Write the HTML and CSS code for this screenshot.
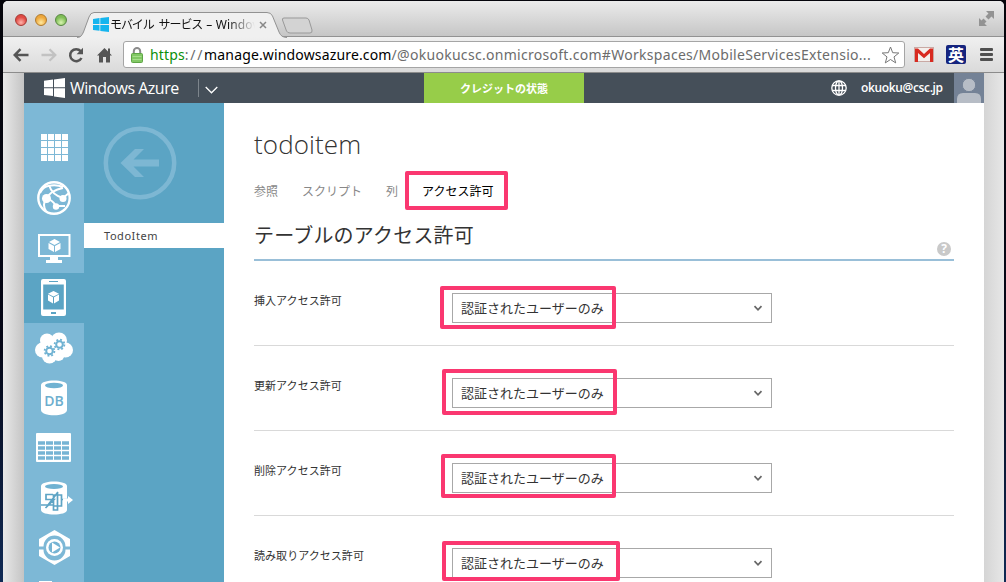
FILE: index.html
```html
<!DOCTYPE html>
<html lang="ja">
<head>
<meta charset="utf-8">
<title>モバイル サービス – Windows Azure</title>
<link rel="stylesheet" href="styles.css">
</head>
<body>
<div class="window">
  <div class="tabstrip">
    <div class="lights"><i class="light red"></i><i class="light amber"></i><i class="light green"></i></div>
    <div class="tab">
      <svg class="tab-shape" width="212" height="26" viewBox="0 0 212 26"><path d="M0 25.5C4 25.5 5 23 6.500 20L12 5Q13.500.5 17 .5H190Q194 .5 195.500 4L202 20Q204 25.500 210 25.500" fill="#f0f0f0" stroke="#929292"/></svg>
      <svg class="favicon" width="16" height="15" viewBox="0 0 16 15"><path fill="#16b5ee" d="M0 2l6.500-.9v6H0zM7.300 1L16 0v7.100H7.300zM0 7.900h6.500v5.900L0 13zM7.300 7.900H16V15l-8.700-1z"/></svg>
      <span class="tab-title">モバイル<span class="second">サービス</span><span class="latin">– Windov</span></span>
      <svg class="tab-close" width="8" height="8" viewBox="0 0 8 8"><path d="M1 1l6 6M7 1L1 7" stroke="#888" stroke-width="1.500"/></svg>
    </div>
    <svg class="newtab" width="34" height="18" viewBox="0 0 34 18"><path d="M3 1h22q2 0 3 2l3 10q.5 3-2 3H9q-2.500 0-3.500-2L1.500 3Q1 1 3 1z" fill="#d3d3d3" stroke="#999"/></svg>
    <svg class="expand" width="15" height="15" viewBox="0 0 15 15" fill="#939393"><path d="M7 0h8v8l-2.500-2.500-3 3-3-3 3-3zM0 7l2.500 2.500 2-2 3 3-2 2L8 15H0z"/></svg>
  </div>
  <div class="toolbar">
    <svg class="back" width="16" height="14" viewBox="0 0 16 14"><path d="M15.500 7H2M7.500 1.200L1.700 7l5.800 5.800" fill="none" stroke="#555" stroke-width="2.500"/></svg>
    <svg class="forward" width="16" height="14" viewBox="0 0 16 14"><path d="M.5 7H14M8.500 1.200L14.300 7l-5.800 5.800" fill="none" stroke="#c2c2c2" stroke-width="2.300"/></svg>
    <svg class="reload" width="16" height="16" viewBox="0 0 16 16"><path d="M12.700 4.200A6 6 0 1 0 13.500 11" fill="none" stroke="#555" stroke-width="2.500"/><path d="M15 .8v6.400H8.600z" fill="#555"/></svg>
    <svg class="home" width="15" height="16" viewBox="0 0 15 16"><path d="M7.500 1L15 8.500H13V15.500H9V10H6v5.500H2V8.500H0zM11 1.500h2v5l-2-2z" fill="#555"/></svg>
    <div class="omnibox">
      <svg class="lock" width="12" height="16" viewBox="0 0 12 16"><path d="M2.800 8V4.200a3.200 3.200 0 0 1 6.400 0V8" fill="none" stroke="#8b8b8b" stroke-width="2"/><rect x=".5" y="6.500" width="11" height="9" rx="1" fill="#82c865" stroke="#5ea546"/><path d="M1.500 9.500h9M1.500 12.500h9" stroke="#a6df8c"/></svg>
      <span class="url"><span class="secure">https</span><span class="path sep">://</span><span class="host">manage.windowsazure.com</span><span class="path rest">/@okuokucsc.onmicrosoft.com#Workspaces/MobileServicesExtensio...</span></span>
      <svg class="star" width="19" height="18" viewBox="0 0 19 18"><path d="M9.500 1l2.200 5.700 6.100.3-4.800 3.900 1.700 6-5.200-3.400-5.200 3.400 1.700-6L1.200 7l6.100-.3z" fill="#fff" stroke="#777"/></svg>
    </div>
    <svg class="gmail" width="20" height="15" viewBox="0 0 20 15"><rect x=".5" y=".5" width="19" height="14" fill="#f4efec" stroke="#c9a9a4"/><path d="M1 15V1.500h3l6 5.500 6-5.500h3V15h-3V6l-6 5.300L4 6v9z" fill="#d82a20"/></svg>
    <span class="eiji">英</span>
    <span class="menu"><i></i><i></i><i></i></span>
  </div>
  <div class="viewport">
    <div class="portal">
      <header class="topbar">
        <svg class="winlogo" width="21" height="20" viewBox="0 0 21 20"><path fill="#fff" d="M0 2.800l9-1.300v7.800H0zM10 1.400L21 0v9.300H10zM0 10.300h9v7.800l-9-1.200zM10 10.300h11V20l-11-1.600z"/></svg>
        <span class="brand">Windows Azure</span>
        <span class="bar"></span>
        <svg class="brand-chev" width="13" height="8" viewBox="0 0 13 8"><path d="M.7 1l5.800 5.800L12.300 1" fill="none" stroke="#fff" stroke-width="1.300"/></svg>
        <span class="credit">クレジットの状態</span>
        <svg class="globe" width="16" height="16" viewBox="0 0 16 16" fill="none" stroke="#fff" stroke-width="1.300"><circle cx="8" cy="8" r="7.200"/><ellipse cx="8" cy="8" rx="3.500" ry="7.200"/><path d="M8 1v14M1.500 5.500h13M1.500 10.500h13"/></svg>
        <span class="account">okuoku@csc.jp</span>
        <svg class="avatar" width="30" height="30" viewBox="0 0 30 30"><rect width="30" height="30" fill="#748296"/><path d="M3 30v-4q0-6 6-6h12q6 0 6 6v4z" fill="#b7bdc6"/><circle cx="15" cy="12" r="6.700" fill="#b7bdc6" stroke="#748296"/></svg>
      </header>
      <div class="body">
        <nav class="rail">
          <a><svg width="40" height="40" viewBox="0 0 40 40"><path d="M10 6v28M17 6v28M24 6v28M31 6v28" stroke="#fff" stroke-width="6"  stroke-dasharray="6 1"/></svg></a>
          <a><svg width="40" height="40" viewBox="0 0 40 40" fill="none" stroke="#fff"><circle cx="20" cy="20" r="15.700" stroke-width="2.400"/><path d="M6 15Q9 9 14 8Q22 6 29 9M12 21Q17 12 29 10M15 7q3 10 14 13M12 21q6 0 10 7q5 0 9 0M12 21q-4 6 0 12M29 20l6-5" stroke-width="2"/><g fill="#fff" stroke="none"><circle cx="12.500" cy="20.500" r="4.500"/><circle cx="29" cy="20.500" r="3.500"/><circle cx="22" cy="28.500" r="3.200"/></g></svg></a>
          <a><svg width="40" height="40" viewBox="0 0 40 40"><rect x="5" y="7" width="30.500" height="21" fill="none" stroke="#fff" stroke-width="2"/><path d="M16 29h8v3h4v3H12v-3h4z" fill="#fff"/><path d="M20.500 11l5.500 3-5.500 3-5.500-3zM14.500 15l5.500 3v6l-5.500-3zM26.500 15L21 18v6l5.500-3z" fill="#fff"/></svg></a>
          <a class="current"><svg width="40" height="40" viewBox="0 0 40 40"><path fill-rule="evenodd" fill="#fff" d="M9 1h21q2 0 2 2v33q0 2-2 2H9q-2 0-2-2V3q0-2 2-2zM9.200 6.500v25h20.600v-25zM15 3v1h9V3zM17 34v2h5v-2z"/><path d="M19.500 13l5.500 2.800-5.500 2.800-5.500-2.800zM14 16.600l5 2.700v6.300l-5-3zM25 16.600l-5 2.700v6.300l5-3z" fill="#fff"/></svg></a>
          <a><svg width="40" height="40" viewBox="0 0 40 40"><g fill="#fff"><circle cx="8.500" cy="22" r="7.500"/><circle cx="13" cy="12.500" r="7"/><circle cx="25" cy="12.500" r="8"/><circle cx="31.500" cy="22" r="7.500"/><circle cx="24.500" cy="27" r="6"/><circle cx="15.500" cy="28" r="7.500"/><path d="M10 10h20v18H10z"/></g><g fill="none" stroke="#6fb2d2"><circle cx="15.500" cy="23" r="3.300" stroke-width="2"/><circle cx="15.500" cy="23" r="4.900" stroke-width="1.800" stroke-dasharray="1.900 1.950"/><circle cx="25.500" cy="16.500" r="3.300" stroke-width="2"/><circle cx="25.500" cy="16.500" r="4.900" stroke-width="1.800" stroke-dasharray="1.900 1.950"/></g></svg></a>
          <a><svg width="40" height="40" viewBox="0 0 40 40"><path d="M7 7c0-6 26-6 26 0v25c0 7-26 7-26 0z" fill="#fff"/><ellipse cx="20" cy="7.500" rx="9" ry="2.700" fill="#6fb2d2"/><text x="20" y="27.500" text-anchor="middle" class="db">DB</text></svg></a>
          <a><svg width="40" height="40" viewBox="0 0 40 40"><rect x="2" y="5" width="35" height="29" rx="1" fill="#fff"/><path d="M4 15h31M4 20h31M4 25h31M4 30h31" stroke="#76b4d4" stroke-width="3.700" stroke-dasharray="7 1"/></svg></a>
          <a><svg width="40" height="40" viewBox="0 0 40 40"><path d="M7 8c0-6 26-6 26 0v24c0 6-26 6-26 0z" fill="#fff"/><ellipse cx="20" cy="8.500" rx="9" ry="2.500" fill="#6fb2d2"/><path d="M19 16.500h-7v5h8L11.500 30M7 27h13M24 14L14 27M23.500 14v18h-4V17h8v11h-8M28 21.500h5" fill="none" stroke="#5da4c5" stroke-width="1.700"/><path d="M29 20.500h5v-2.500l5 4-5 4v-2.500h-5z" fill="#fff"/></svg></a>
          <a><svg width="40" height="40" viewBox="0 0 40 40"><path d="M20.500 2L36 11v7.500h-4.500a11 11 0 0 0-22 0H5V11zM20.500 37L36 28v-6.500h-4.500a11 11 0 0 1-22 0H5V28z" fill="#fff"/><circle cx="20.500" cy="19.500" r="8.500" fill="#fff"/><circle cx="20.500" cy="19.500" r="6" fill="#76b4d4"/><path d="M18 14.500l8 5-8 5z" fill="#fff"/></svg></a>
          <a><svg width="40" height="40" viewBox="0 0 40 40"><path d="M5 3h13v3h17v30H5z" fill="#fff"/></svg></a>
        </nav>
        <aside class="drawer">
          <svg class="circle-back" width="74" height="74" viewBox="0 0 74 74"><circle cx="37" cy="37" r="34.200" fill="none" stroke="#7db7d3" stroke-width="4.500"/><path d="M17.500 37L32 23h9L30.500 33.500H56v7H30.500L41 51h-9z" fill="#7db7d3"/></svg>
          <div class="drawer-item">TodoItem</div>
        </aside>
        <main class="content">
          <h1>todoitem</h1>
          <div class="tabs"><span>参照</span><span>スクリプト</span><span>列</span><span class="active">アクセス許可<i class="mark mark-tab"></i></span></div>
          <div class="section"><h2>テーブルのアクセス許可</h2><span class="help">?</span></div>
          <div class="row"><label>挿入アクセス許可</label><div class="select">認証されたユーザーのみ<svg width="10" height="7" viewBox="0 0 10 7"><path d="M1.500 1.200L5 4.800l3.500-3.600" fill="none" stroke="#666" stroke-width="1.700"/></svg><i class="mark mark-1"></i></div></div>
          <div class="row"><label>更新アクセス許可</label><div class="select">認証されたユーザーのみ<svg width="10" height="7" viewBox="0 0 10 7"><path d="M1.500 1.200L5 4.800l3.500-3.600" fill="none" stroke="#666" stroke-width="1.700"/></svg><i class="mark mark-2"></i></div></div>
          <div class="row"><label>削除アクセス許可</label><div class="select">認証されたユーザーのみ<svg width="10" height="7" viewBox="0 0 10 7"><path d="M1.500 1.200L5 4.800l3.500-3.600" fill="none" stroke="#666" stroke-width="1.700"/></svg><i class="mark mark-3"></i></div></div>
          <div class="row"><label>読み取りアクセス許可</label><div class="select">認証されたユーザーのみ<svg width="10" height="7" viewBox="0 0 10 7"><path d="M1.500 1.200L5 4.800l3.500-3.600" fill="none" stroke="#666" stroke-width="1.700"/></svg><i class="mark mark-4"></i></div></div>
        </main>
      </div>
    </div>
  </div>
</div>
</body>
</html>
```

FILE: styles.css
```css
* { box-sizing: border-box; }
html, body { margin: 0; height: 582px; overflow: hidden; }
body {
  padding: 1px 2px 0 3px;
  background: linear-gradient(#05050b, #060818 60%, #102a55);
  font-family: "Noto Sans", "Noto Sans CJK JP", sans-serif;
}
svg { display: block; flex: none; }
.window { height: 581px; border-radius: 5px 5px 0 0; overflow: hidden; background: #e5e5e5; }

/* browser chrome */
.tabstrip {
  display: flex; height: 36px; padding-left: 12px;
  background: linear-gradient(#ebebeb, #c6c6c6);
  border-bottom: 1px solid #929292;
}
.lights { display: flex; gap: 8px; padding-top: 13px; width: 62px; flex: none; }
.light { width: 12px; height: 12px; border-radius: 50%; border: 1px solid; }
.red { background: radial-gradient(circle at 50% 75%, #ffb3ab, #e04a43 60%); border-color: #a53934; }
.amber { background: radial-gradient(circle at 50% 75%, #ffeaa0, #eda73c 60%); border-color: #af7a2d; }
.green { background: radial-gradient(circle at 50% 75%, #d8f5b0, #7fbd56 60%); border-color: #568641; }
.tab { display: grid; grid-template: 26px / 212px; width: 203px; margin-top: 11px; flex: none; }
.tab > * { grid-area: 1 / 1; }
.favicon { margin: 5px 0 0 16px; }
.tab-title {
  margin: 4px 0 0 33px; width: 146px; white-space: nowrap;
  font: 12px/17px "Noto Sans", "Noto Sans CJK JP", sans-serif; letter-spacing: -1.1px; color: #111;
  mask-image: linear-gradient(90deg, #000 118px, transparent 145px);
}
.second { margin-left: 5px; }
.latin { margin-left: 4px; letter-spacing: .15px; }
.tab-close { margin: 9px 0 0 182px; }
.newtab { margin: 16px 0 0 1px; }
.expand { margin: 10px 10px 0 auto; }
.toolbar {
  display: flex; align-items: center; height: 36px; padding: 0 12px 0 10px;
  background: linear-gradient(#f0f0f0, #dadada); border-bottom: 1px solid #8c8c8c;
}
.forward { margin-left: 12px; }
.reload { margin-left: 11px; }
.home { margin-left: 13px; }
.omnibox {
  display: flex; align-items: center; width: 782px; height: 27px; margin-left: 11px; padding: 0 4px 0 7px;
  background: #fff; border: 1px solid #a5a5a5; border-radius: 3px; flex: none;
}
.url { margin-left: 7px; width: 732px; white-space: nowrap; font: 14px/24px "Noto Sans", sans-serif; color: #000; letter-spacing: .15px; }
.secure { color: #0a8f0a; }
.path { color: #6c6c6c; }
.sep { letter-spacing: 1.7px; }
.rest { letter-spacing: .29px; }
.star { margin-left: 1px; }
.gmail { margin-left: 9px; }
.eiji {
  margin-left: 12px; width: 20px; height: 19px; border-radius: 2px; background: #15247e; color: #fff;
  font: bold 16px/18px "Noto Sans CJK JP", sans-serif; text-align: center; flex: none;
}
.menu { display: flex; flex-direction: column; gap: 2px; margin-left: 14px; flex: none; }
.menu i { width: 13px; height: 3px; border-radius: 1px; background: #505050; }

/* portal */
.viewport { height: 509px; padding: 0 20px 0 21px; background: linear-gradient(90deg, #e8e8e8, #c4c4c4 21px, #d4d4d4 980px, #e7e7e7); }
.portal { width: 960px; height: 509px; background: #fff; }
.topbar { display: flex; align-items: center; height: 30px; background: #454f59; color: #fff; }
.winlogo { margin-left: 20px; }
.brand { margin-left: 5px; width: 112px; font: 16px/28px "Open Sans", sans-serif; letter-spacing: -.5px; white-space: nowrap; }
.bar { margin-left: 16px; width: 1px; height: 18px; background: #7d858c; }
.brand-chev { margin: 4px 0 0 6px; }
.credit {
  margin-left: 206px; width: 160px; height: 30px; background: #97cd49; text-align: center;
  font: bold 11px/31px "Noto Sans CJK JP", sans-serif; flex: none;
}
.globe { margin-left: 247px; }
.account { margin-left: 14px; width: 82px; font: 600 12px/30px "Open Sans", sans-serif; letter-spacing: -.35px; white-space: nowrap; }
.avatar { margin-left: auto; }
.body { display: flex; height: 479px; overflow: hidden; }
.rail { width: 60px; padding-top: 20px; background: #7db8d6; flex: none; }
.rail a { display: flex; justify-content: center; align-items: center; height: 50px; }
.rail .current { background: #5ba4c4; }
.db { font: 600 14px "Open Sans", sans-serif; fill: #6caece; }
.drawer { width: 140px; background: #5ba4c4; flex: none; }
.circle-back { margin: 23px 0 23px 19px; }
.drawer-item { height: 25px; padding-left: 20px; background: #fff; color: #444; font: 11px/26px "Noto Sans", sans-serif; letter-spacing: .55px; }
.content { width: 760px; padding: 0 30px; color: #333; font-family: "Noto Sans CJK JP", sans-serif; }
h1 { margin: 22px 0 0; font: 300 26px/38px "Open Sans", sans-serif; letter-spacing: .1px; color: #333; }
.tabs { display: flex; gap: 24px; margin-top: 16px; height: 24px; font-size: 12px; line-height: 24px; color: #888; }
.tabs .active { position: relative; color: #000; }
.section { display: flex; justify-content: space-between; height: 58px; border-bottom: 2px solid #99bfd8; }
h2 { margin: 17px 0 0; font-weight: 400; font-size: 20px; line-height: 30px; letter-spacing: .2px; color: #333; }
.help { margin: 39px 3px 0 0; width: 14px; height: 14px; border-radius: 50%; background: #c9c9c9; color: #fff; font: bold 12px/14px "Open Sans", sans-serif; text-align: center; }
.row { display: flex; height: 85px; padding-top: 32px; border-bottom: 1px solid #d9d9d9; }
label { width: 198px; margin-top: -2px; font-size: 11px; line-height: 18px; letter-spacing: .05px; }
.select {
  position: relative; display: flex; align-items: center; justify-content: space-between;
  width: 320px; height: 30px; padding: 0 8px; border: 1px solid #a8a8a8; font-size: 13px; line-height: 28px;
}

/* highlight frames laid over controls */
.mark { position: absolute; border: 4px solid #fa3770; border-radius: 2px; }
.mark-tab { left: -17px; top: -8px; width: 103px; height: 39px; }
.mark-1 { left: -13px; top: -8px; width: 176px; height: 43px; }
.mark-2 { left: -11px; top: -10px; width: 175px; height: 46px; }
.mark-3 { left: -12px; top: -10px; width: 175px; height: 44px; }
.mark-4 { left: -11px; top: -8px; width: 178px; height: 40px; }
```
